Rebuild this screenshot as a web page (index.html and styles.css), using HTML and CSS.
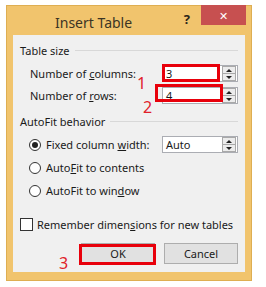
FILE: index.html
```html
<!DOCTYPE html>
<html lang="en">
<head>
  <meta charset="UTF-8">
  <title>Insert Table</title>
  <link rel="stylesheet" href="styles.css">
</head>
<body>
  <div class="dialog">
    <div class="titlebar">
      <span class="title">Insert Table</span>
      <span class="help">?</span>
      <span class="close">&#x2715;</span>
    </div>
    <div class="panel">
      <div class="group-head"><span>Table size</span></div>
      <div class="field first">
        <label>Number of <u>c</u>olumns:</label>
        <div class="numbox"><span class="val">3</span><span class="spin"><i class="up"></i><i class="down"></i></span></div>
      </div>
      <div class="field">
        <label>Number of <u>r</u>ows:</label>
        <div class="numbox"><span class="val">4</span><span class="spin"><i class="up"></i><i class="down"></i></span></div>
      </div>

      <div class="group-head second"><span>AutoFit behavior</span></div>
      <div class="option first">
        <span class="radio checked"></span>
        <label class="wide">Fixed column <u>w</u>idth:</label>
        <div class="numbox"><span class="val">Auto</span><span class="spin"><i class="up"></i><i class="down"></i></span></div>
      </div>
      <div class="option">
        <span class="radio"></span>
        <label>Auto<u>F</u>it to contents</label>
      </div>
      <div class="option">
        <span class="radio"></span>
        <label>AutoFit to win<u>d</u>ow</label>
      </div>

      <div class="check">
        <span class="box"></span>
        <label>Remember dimen<u>s</u>ions for new tables</label>
      </div>

      <div class="buttons">
        <div class="btn">OK</div>
        <div class="btn">Cancel</div>
      </div>

      <!-- red annotations drawn over the dialog -->
      <div class="mark mark-cols"></div>
      <div class="mark mark-rows"></div>
      <div class="mark mark-ok"></div>
      <span class="num num-1">1</span>
      <span class="num num-2">2</span>
      <span class="num num-3">3</span>
    </div>
  </div>
</body>
</html>
```

FILE: styles.css
```css
body {
  margin: 0;
  background: #fff;
  font-family: 'Noto Sans', sans-serif;
  font-size: 11px;
  color: #1a1a1a;
}
.dialog {
  margin: 5px 0 0 6px;
  width: 246px;
  height: 276px;
  box-sizing: border-box;
  background: #f1c46d;
  border: 1px solid #deae52;
  display: flex;
  flex-direction: column;
}
.titlebar {
  height: 29px;
  display: flex;
  align-items: flex-start;
}
.title {
  padding-left: 48px;
  padding-top: 7px;
  font-size: 14px;
  color: #3b3424;
}
.help {
  margin-left: auto;
  margin-top: 4px;
  margin-right: 11px;
  font-weight: bold;
  font-size: 13px;
  color: #2a2418;
}
.close {
  width: 45px;
  height: 20px;
  margin-top: -1px;
  margin-right: 5px;
  background: #c75050;
  color: #fff;
  font-size: 11px;
  display: flex;
  align-items: center;
  justify-content: center;
}
.panel {
  position: relative;
  flex: 1;
  margin: 0 6px 8px 6px;
  padding: 0 7px;
  background: #f0f0f0;
}
.panel label {
  white-space: nowrap;
}
.group-head {
  display: flex;
  align-items: center;
  height: 14px;
  margin-top: 8px;
}
.group-head::after {
  content: "";
  flex: 1;
  margin-left: 5px;
  border-top: 1px solid #d8d8d8;
}
.group-head.second {
  margin-top: 10px;
}
.field {
  display: flex;
  align-items: center;
  height: 17px;
  margin-top: 5px;
  padding-left: 10px;
}
.field.first {
  margin-top: 8px;
}
.field label {
  width: 132px;
}
.numbox {
  width: 76px;
  height: 17px;
  box-sizing: border-box;
  border: 1px solid #abadb3;
  background: #fff;
  display: flex;
}
.val {
  flex: 1;
  padding-left: 3px;
  line-height: 15px;
}
.spin {
  width: 14px;
  margin: 0 1px 0 0;
  box-sizing: border-box;
  border: 1px solid #a9a9a9;
  background: #ececec;
  display: flex;
  flex-direction: column;
}
.spin i {
  flex: 1;
  display: flex;
  align-items: center;
  justify-content: center;
}
.spin i + i {
  border-top: 1px solid #a9a9a9;
}
.spin i::before {
  content: "";
  border-left: 3px solid transparent;
  border-right: 3px solid transparent;
}
.spin .up::before {
  border-bottom: 3px solid #222;
}
.spin .down::before {
  border-top: 3px solid #222;
}
.option {
  display: flex;
  align-items: center;
  height: 17px;
  margin-top: 6px;
  padding-left: 9px;
}
.option.first {
  margin-top: 8px;
}
.radio {
  width: 12px;
  height: 12px;
  box-sizing: border-box;
  border: 1px solid #333;
  border-radius: 50%;
  background: #fff;
  margin-right: 5px;
  display: flex;
  align-items: center;
  justify-content: center;
}
.radio.checked::after {
  content: "";
  width: 6px;
  height: 6px;
  border-radius: 50%;
  background: #222;
}
.option .wide {
  width: 116px;
}
.check {
  display: flex;
  align-items: center;
  height: 17px;
  margin-top: 17px;
}
.box {
  width: 13px;
  height: 13px;
  box-sizing: border-box;
  border: 1px solid #333;
  background: #fff;
  margin-right: 4px;
}
.buttons {
  display: flex;
  justify-content: flex-end;
  gap: 9px;
  margin-top: 10px;
}
.btn {
  width: 74px;
  height: 21px;
  box-sizing: border-box;
  border: 1px solid #adadad;
  background: #e1e1e1;
  display: flex;
  align-items: center;
  justify-content: center;
}
.mark {
  position: absolute;
  box-sizing: border-box;
  border: 3px solid #e8000b;
}
.mark-cols {
  left: 149px;
  top: 29px;
  width: 58px;
  height: 18px;
}
.mark-rows {
  left: 142px;
  top: 49px;
  width: 68px;
  height: 18px;
}
.mark-ok {
  left: 66px;
  top: 209px;
  width: 77px;
  height: 21px;
}
.num {
  position: absolute;
  color: #e0202a;
  font-size: 16px;
  line-height: 16px;
}
.num-1 {
  left: 124px;
  top: 40px;
}
.num-2 {
  left: 130px;
  top: 64px;
}
.num-3 {
  left: 46px;
  top: 220px;
}
```
